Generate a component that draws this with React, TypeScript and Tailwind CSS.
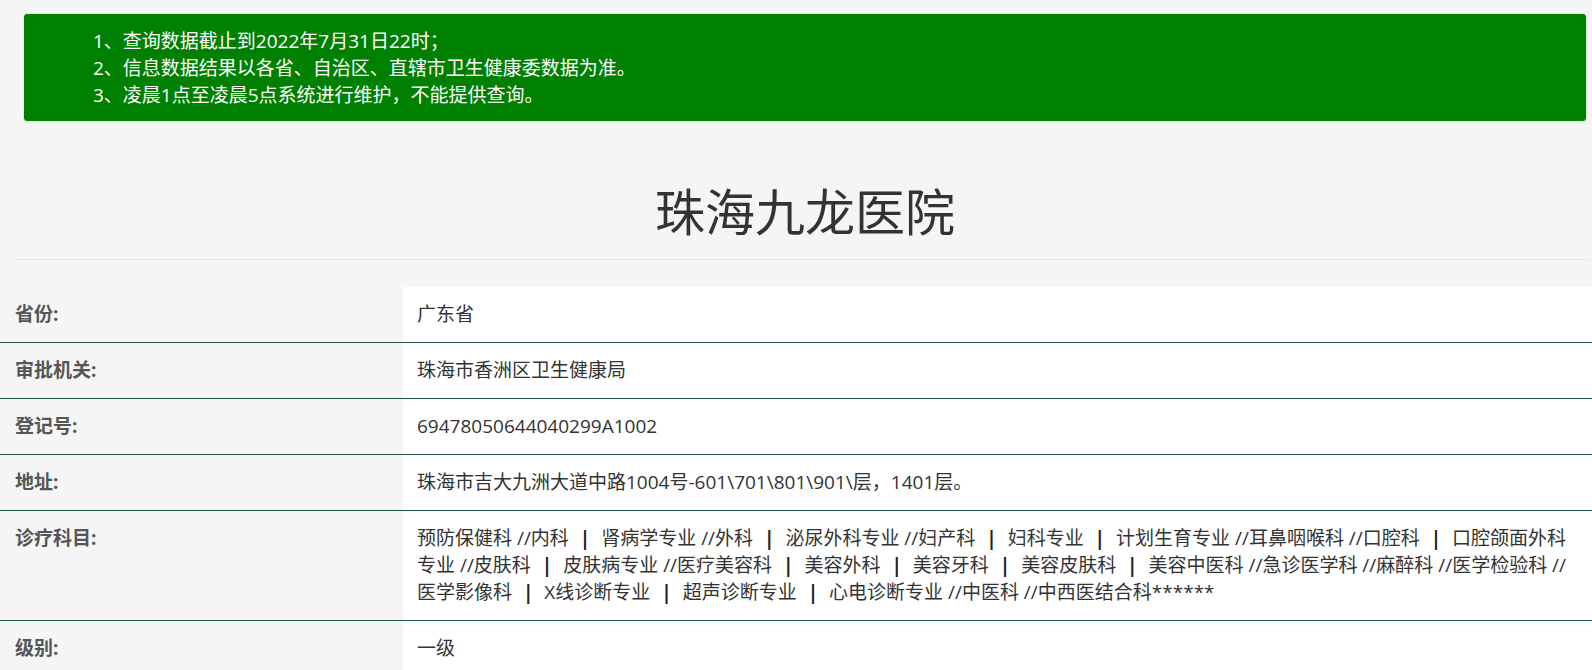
const notices = [
  '1、查询数据截止到2022年7月31日22时；',
  '2、信息数据结果以各省、自治区、直辖市卫生健康委数据为准。',
  '3、凌晨1点至凌晨5点系统进行维护，不能提供查询。',
];

const rows: { label: string; value: string }[] = [
  { label: '省份:', value: '广东省' },
  { label: '审批机关:', value: '珠海市香洲区卫生健康局' },
  { label: '登记号:', value: '69478050644040299A1002' },
  { label: '地址:', value: '珠海市吉大九洲大道中路1004号-601\\701\\801\\901\\层，1401层。' },
  {
    label: '诊疗科目:',
    value:
      '预防保健科 //内科 | 肾病学专业 //外科 | 泌尿外科专业 //妇产科 | 妇科专业 | 计划生育专业 //耳鼻咽喉科 //口腔科 | 口腔颌面外科专业 //皮肤科 | 皮肤病专业 //医疗美容科 | 美容外科 | 美容牙科 | 美容皮肤科 | 美容中医科 //急诊医学科 //麻醉科 //医学检验科 //医学影像科 | X线诊断专业 | 超声诊断专业 | 心电诊断专业 //中医科 //中西医结合科******',
  },
  { label: '级别:', value: '一级' },
];

// bars in the subject list are drawn heavier than the text around them
function renderValue(value: string) {
  const parts = value.split(' | ');
  return parts.map((p, i) => (
    <span key={i}>
      {p}
      {i < parts.length - 1 && (
        <>
          {' '}
          <span className="mx-[6px] font-bold text-[#222]">|</span>{' '}
        </>
      )}
    </span>
  ));
}

export default function App() {
  return (
    <div className="min-h-screen bg-[#f5f5f5] font-['Open_Sans','Noto_Sans_CJK_SC',sans-serif]">
      <div className="pt-[13px] pl-[23px] pr-[5px]">
        <div className="rounded-[4px] border border-[#e3efd9] bg-[#008000] pl-[69px] pt-[14px] pb-[12px] text-[19px] leading-[27px] text-white">
          {notices.map((n) => (
            <div key={n}>{n}</div>
          ))}
        </div>
      </div>

      <div className="pl-[23px] pr-[5px]">
        <h1 className="mt-[57px] mb-[20px] text-center font-['Noto_Sans_CJK_SC',sans-serif] text-[50px] leading-[60px] font-normal text-[#333]">
          珠海九龙医院
        </h1>
      </div>
      <div className="ml-[15px] mr-[2px] border-t border-[#e8e8e8]" />

      <div className="mt-[27px] text-[19px] leading-[27px]">
        {rows.map((row) => (
          <div key={row.label} className="flex border-b border-[#1f5c46]">
            <div className="w-[403px] shrink-0 py-[14px] pl-[15px] font-bold text-[#555]">
              {row.label}
            </div>
            <div className="flex-1 bg-white py-[14px] pl-[14px] pr-[12px] text-[#333]">
              {renderValue(row.value)}
            </div>
          </div>
        ))}
      </div>
    </div>
  );
}
